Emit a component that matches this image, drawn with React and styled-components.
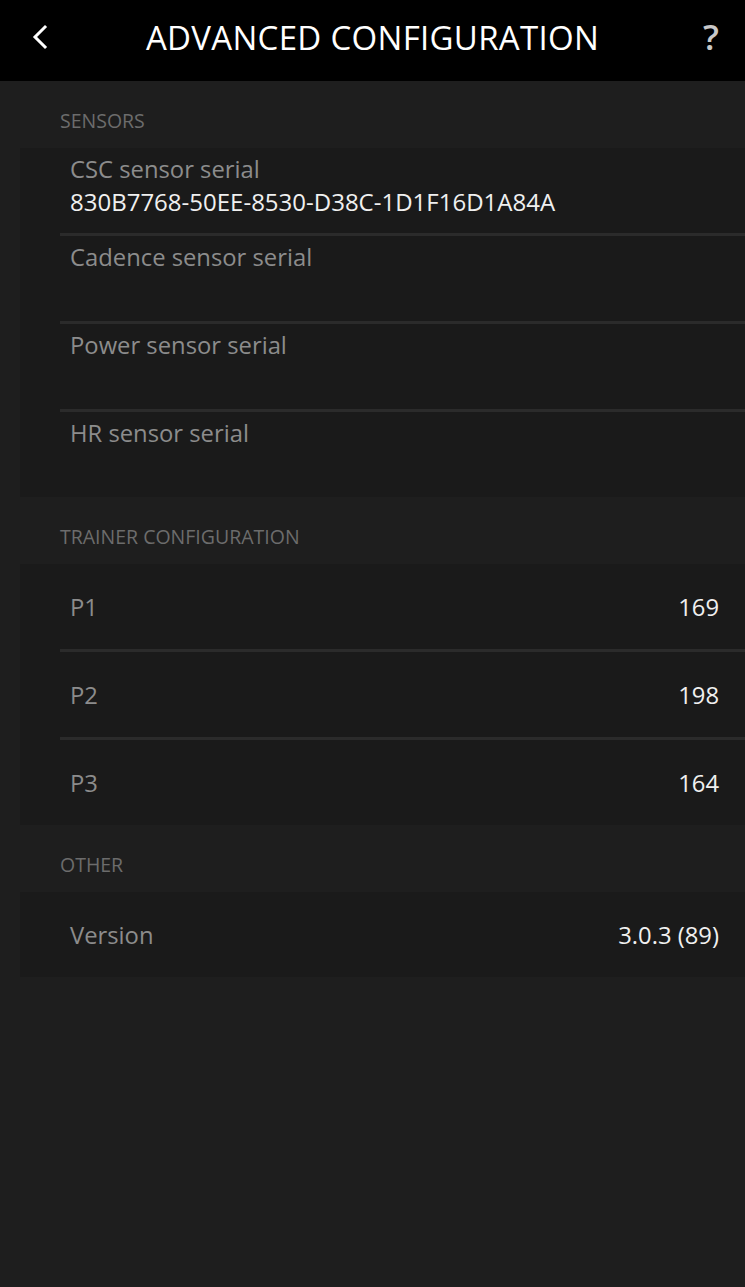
import React from "react";
import styled, { createGlobalStyle } from "styled-components";

const Global = createGlobalStyle`
  html, body { margin: 0; padding: 0; background: #1e1e1e; }
  body { font-family: "Open Sans", "Noto Sans", sans-serif; -webkit-font-smoothing: antialiased; }
  * { box-sizing: border-box; }
`;

const Screen = styled.div`
  width: 745px;
  min-height: 1287px;
  background: #1e1e1e;
  display: flex;
  flex-direction: column;
`;

const Header = styled.header`
  height: 81px;
  background: #000;
  display: grid;
  grid-template-columns: 80px 1fr 80px;
  align-items: center;
`;

const BackButton = styled.div`
  display: flex;
  align-items: center;
  justify-content: flex-start;
  padding-left: 30px;
  padding-bottom: 8px;
  color: #fff;
`;

const Title = styled.h1`
  margin: 0;
  text-align: center;
  color: #fff;
  font-weight: 400;
  font-size: 33px;
  letter-spacing: 0.3px;
  padding-bottom: 6px;
`;

const Help = styled.div`
  text-align: right;
  padding-right: 26px;
  padding-bottom: 8px;
  color: #c8c8c8;
  font-size: 35px;
  font-weight: 600;
`;

const SectionLabel = styled.div`
  margin: 26px 0 13px 60px;
  line-height: 28px;
  font-size: 19.5px;
  color: #6c6c6c;
  text-transform: uppercase;
`;

const Card = styled.section`
  margin-left: 20px;
  background: #1a1a1a;
  padding-left: 40px;
`;

const Row = styled.div`
  height: ${(p) => (p.$last ? 85 : 88)}px;
  border-bottom: ${(p) => (p.$last ? "none" : "3px solid #2b2b2b")};
  padding: ${(p) => (p.$stacked ? "5px 26px 0 10px" : "0 26px 0 10px")};
  display: flex;
  flex-direction: ${(p) => (p.$stacked ? "column" : "row")};
  align-items: ${(p) => (p.$stacked ? "flex-start" : "center")};
  justify-content: ${(p) => (p.$stacked ? "flex-start" : "space-between")};
`;

const Label = styled.div`
  font-size: 23.8px;
  line-height: 32px;
  color: #8c8c8c;
`;

const SubValue = styled.div`
  font-size: 24px;
  line-height: 34px;
  color: #f0f0f0;
`;

const Value = styled.div`
  font-size: 23.8px;
  line-height: 32px;
  color: #f0f0f0;
`;

const sensors = [
  { label: "CSC sensor serial", value: "830B7768-50EE-8530-D38C-1D1F16D1A84A" },
  { label: "Cadence sensor serial", value: "" },
  { label: "Power sensor serial", value: "" },
  { label: "HR sensor serial", value: "" },
];

const trainer = [
  { label: "P1", value: "169" },
  { label: "P2", value: "198" },
  { label: "P3", value: "164" },
];

export default function App() {
  return (
    <Screen>
      <Global />
      <Header>
        <BackButton>
          <svg width="20" height="26" viewBox="0 0 20 26">
            <path d="M15 3 L5 13 L15 23" fill="none" stroke="#fff" strokeWidth="3" strokeLinecap="square" />
          </svg>
        </BackButton>
        <Title>ADVANCED CONFIGURATION</Title>
        <Help>?</Help>
      </Header>

      <SectionLabel>Sensors</SectionLabel>
      <Card>
        {sensors.map((s, i) => (
          <Row key={s.label} $stacked $last={i === sensors.length - 1}>
            <Label>{s.label}</Label>
            {s.value && <SubValue>{s.value}</SubValue>}
          </Row>
        ))}
      </Card>

      <SectionLabel>Trainer configuration</SectionLabel>
      <Card>
        {trainer.map((t, i) => (
          <Row key={t.label} $last={i === trainer.length - 1}>
            <Label>{t.label}</Label>
            <Value>{t.value}</Value>
          </Row>
        ))}
      </Card>

      <SectionLabel>Other</SectionLabel>
      <Card>
        <Row $last>
          <Label>Version</Label>
          <Value>3.0.3 (89)</Value>
        </Row>
      </Card>
    </Screen>
  );
}
